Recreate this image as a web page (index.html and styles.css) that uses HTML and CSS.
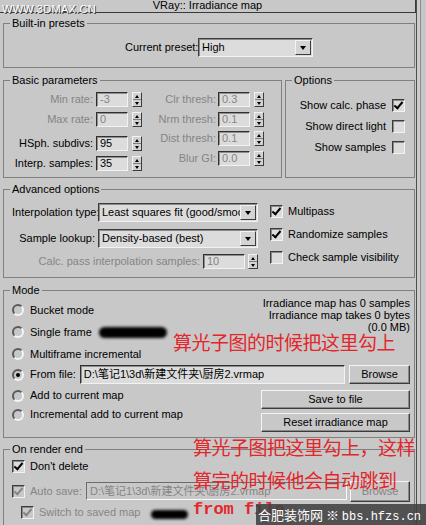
FILE: index.html
```html
<!DOCTYPE html>
<html lang="zh-CN">
<head>
	<meta charset="UTF-8">
	<meta name="viewport" content="width=device-width, initial-scale=1">
	<title>VRay:: Irradiance map</title>
	<link rel="stylesheet" href="styles.css">
</head>
<body>

	<div class="rollout">
		<div class="title">VRay:: Irradiance map</div>

		<fieldset class="grp presets">
			<legend>Built-in presets</legend>
			<div class="preset-row">
				<span class="lbl">Current preset:</span>
				<div class="combo preset"><span>High</span><i class="drop"></i></div>
			</div>
		</fieldset>

		<div class="pair">
			<fieldset class="grp basic">
				<legend>Basic parameters</legend>
				<div class="cols">
					<div class="col col-a">
						<div class="prm off"><span class="lbl">Min rate:</span><span class="field">-3</span><span class="spin"><i></i><i></i></span></div>
						<div class="prm off"><span class="lbl">Max rate:</span><span class="field">0</span><span class="spin"><i></i><i></i></span></div>
						<div class="prm sep"><span class="lbl">HSph. subdivs:</span><span class="field">95</span><span class="spin"><i></i><i></i></span></div>
						<div class="prm"><span class="lbl">Interp. samples:</span><span class="field">35</span><span class="spin"><i></i><i></i></span></div>
					</div>
					<div class="col col-b">
						<div class="prm off"><span class="lbl">Clr thresh:</span><span class="field">0.3</span><span class="spin"><i></i><i></i></span></div>
						<div class="prm off"><span class="lbl">Nrm thresh:</span><span class="field">0.1</span><span class="spin"><i></i><i></i></span></div>
						<div class="prm off tight"><span class="lbl">Dist thresh:</span><span class="field">0.1</span><span class="spin"><i></i><i></i></span></div>
						<div class="prm off"><span class="lbl">Blur GI:</span><span class="field">0.0</span><span class="spin"><i></i><i></i></span></div>
					</div>
				</div>
			</fieldset>

			<fieldset class="grp options">
				<legend>Options</legend>
				<div class="opt-list">
					<div class="opt">Show calc. phase<span class="chk on"></span></div>
					<div class="opt">Show direct light<span class="chk"></span></div>
					<div class="opt">Show samples<span class="chk"></span></div>
				</div>
			</fieldset>
		</div>

		<fieldset class="grp adv">
			<legend>Advanced options</legend>
			<div class="adv-body">
				<div class="adv-left">
					<div class="arow"><span class="lbl">Interpolation type:</span><div class="combo wide"><span>Least squares fit (good/smooth)</span><i class="drop"></i></div></div>
					<div class="arow"><span class="lbl">Sample lookup:</span><div class="combo wide"><span>Density-based (best)</span><i class="drop"></i></div></div>
					<div class="arow calc off"><span>Calc. pass interpolation samples:</span><span class="field">10</span><span class="spin"><i></i><i></i></span></div>
				</div>
				<div class="adv-right">
					<div class="ck"><span class="chk on"></span>Multipass</div>
					<div class="ck"><span class="chk on"></span>Randomize samples</div>
					<div class="ck"><span class="chk"></span>Check sample visibility</div>
				</div>
			</div>
		</fieldset>

		<fieldset class="grp mode">
			<legend>Mode</legend>
			<div class="mode-top">
				<div class="radios">
					<div class="rd"><span class="radio"></span>Bucket mode</div>
					<div class="rd"><span class="radio"></span>Single frame</div>
					<div class="rd"><span class="radio"></span>Multiframe incremental</div>
				</div>
				<div class="status">Irradiance map has 0 samples<br>Irradiance map takes 0 bytes<br>(0.0 MB)</div>
			</div>
			<div class="file-row">
				<div class="rd"><span class="radio on"></span>From file:</div>
				<span class="field path">D:\笔记1\3d\新建文件夹\厨房2.vrmap</span>
				<span class="btn browse">Browse</span>
			</div>
			<div class="mode-bottom">
				<div class="radios low">
					<div class="rd"><span class="radio"></span>Add to current map</div>
					<div class="rd"><span class="radio"></span>Incremental add to current map</div>
				</div>
				<div class="btns">
					<span class="btn">Save to file</span>
					<span class="btn">Reset irradiance map</span>
				</div>
			</div>
		</fieldset>

		<fieldset class="grp rend">
			<legend>On render end</legend>
			<div class="rend-body">
				<div class="ck"><span class="chk on"></span>Don't delete</div>
				<div class="save-row off">
					<div class="ck"><span class="chk on"></span>Auto save:</div>
					<span class="field path">D:\笔记1\3d\新建文件夹\厨房2.vrmap</span>
					<span class="btn browse">Browse</span>
				</div>
				<div class="ck sub off"><span class="chk on"></span>Switch to saved map</div>
			</div>
		</fieldset>
	</div>

	<div class="scroll"><div class="track"></div></div>

	<!-- 图上的标注和水印 -->
	<div class="wm-top">WWW.3DMAX.CN</div>
	<div class="smear s1"></div>
	<div class="note n1">算光子图的时候把这里勾上</div>
	<div class="note n2">算光子图把这里勾上，这样</div>
	<div class="note n3">算完的时候他会自动跳到</div>
	<div class="note n4">from file</div>
	<div class="smear s2"></div>
	<div class="wm-bot"><span class="cn">合肥装饰网</span> ※ <span class="url">bbs.hfzs.cn</span></div>

</body>
</html>
```

FILE: styles.css
```css
* {
	box-sizing: border-box;
}
body {
	margin: 0;
	width: 426px;
	height: 525px;
	overflow: hidden;
	position: relative;
	display: flex;
	background: #c8c8c8;
	color: #000;
	font: 11px/13px "Liberation Sans", Arial, "Noto Sans CJK SC", sans-serif;
}
.rollout {
	width: 416px;
}
.scroll {
	flex: 1;
	border-left: 1px solid #4e4e4e;
	padding-left: 3px;
	background: #cbcbcb;
}
.track {
	height: 100%;
	border-left: 1px solid #8e8e8e;
	background: #c6c6c6;
}
.title {
	height: 13px;
	line-height: 11px;
	text-align: center;
	border-bottom: 1px solid #3a3a3a;
	border-right: 1px solid #3a3a3a;
}

/* group boxes */
.grp {
	margin: 0 1px 0 3px;
	padding: 0;
	min-width: 0;
	border: 1px solid #808080;
}
.grp legend {
	margin-left: 6px;
	padding: 0 2px;
	line-height: 13px;
}
.presets {
	margin-top: 4px;
}
.adv, .rend {
	margin-top: 5px;
}
.mode {
	margin-top: 6px;
}
.lbl {
	text-align: right;
	white-space: nowrap;
}
.off {
	color: #858585;
}

/* controls */
.combo {
	display: flex;
	align-items: center;
	min-width: 0;
	height: 19px;
	padding-left: 3px;
	background: #dcdcdc;
	border: 1px solid;
	border-color: #3c3c3c #f2f2f2 #f2f2f2 #3c3c3c;
	box-shadow: inset 1px 1px 0 #8a8a8a;
}
.combo span {
	flex: 1;
	min-width: 0;
	overflow: hidden;
	white-space: nowrap;
}
.drop {
	display: flex;
	align-items: center;
	justify-content: center;
	flex: none;
	width: 16px;
	height: 15px;
	margin-right: 1px;
	background: #d4d4d4;
	border: 1px solid;
	border-color: #f4f4f4 #3c3c3c #3c3c3c #f4f4f4;
}
.drop::after {
	content: "";
	border-left: 3.5px solid transparent;
	border-right: 3.5px solid transparent;
	border-top: 4px solid #000;
}
.field {
	width: 32px;
	height: 15px;
	padding-left: 3px;
	line-height: 13px;
	white-space: nowrap;
	overflow: hidden;
	background: #dcdcdc;
	border: 1px solid;
	border-color: #303030 #f2f2f2 #f2f2f2 #303030;
	box-shadow: inset 1px 1px 0 #8e8e8e;
}
.spin {
	display: flex;
	flex-direction: column;
	width: 10px;
	height: 15px;
	background: #d2d2d2;
	border: 1px solid;
	border-color: #f2f2f2 #3c3c3c #3c3c3c #f2f2f2;
}
.spin i {
	flex: 1;
	display: flex;
	align-items: center;
	justify-content: center;
}
.spin i + i {
	border-top: 1px solid #7c7c7c;
}
.spin i::after {
	content: "";
	border-left: 2.5px solid transparent;
	border-right: 2.5px solid transparent;
	border-bottom: 3px solid #000;
}
.spin i + i::after {
	border-bottom: 0;
	border-top: 3px solid #000;
}
.chk {
	display: flex;
	align-items: center;
	justify-content: center;
	flex: none;
	width: 13px;
	height: 13px;
	background: #dcdcdc;
	border: 1px solid;
	border-color: #3c3c3c #f2f2f2 #f2f2f2 #3c3c3c;
	box-shadow: inset 1px 1px 0 #8a8a8a;
}
.chk.on::after {
	content: "";
	width: 3px;
	height: 7px;
	margin-top: -2px;
	border: solid #000;
	border-width: 0 2px 2px 0;
	transform: rotate(40deg);
}
.off .chk {
	background: #c8c8c8;
}
.off .chk.on::after {
	border-color: #858585;
}
.radio {
	display: flex;
	align-items: center;
	justify-content: center;
	flex: none;
	width: 12px;
	height: 12px;
	border-radius: 50%;
	border: 2px solid;
	border-color: #5a5a5a #f4f4f4 #f4f4f4 #5a5a5a;
}
.radio.on::after {
	content: "";
	width: 4px;
	height: 4px;
	border-radius: 50%;
	background: #000;
}
.btn {
	display: flex;
	align-items: center;
	justify-content: center;
	flex: none;
	height: 19px;
	white-space: nowrap;
	border: 1px solid;
	border-color: #f4f4f4 #3c3c3c #3c3c3c #f4f4f4;
	box-shadow: inset -1px -1px 0 #8a8a8a;
}

/* built-in presets */
.preset-row {
	display: flex;
	align-items: center;
	gap: 3px;
	padding: 8px 0 10px 121px;
}
.preset-row .lbl {
	width: 70px;
}
.preset {
	width: 115px;
}

/* basic parameters + options */
.pair {
	display: flex;
	gap: 3px;
	margin: 6px 1px 0 3px;
}
.pair .grp {
	margin: 0;
}
.basic {
	width: 279px;
}
.options {
	flex: 1;
}
.cols {
	display: flex;
	padding: 5px 0 6px 8px;
}
.col-a {
	width: 131px;
}
.col-b {
	margin-left: 7px;
}
.prm {
	display: flex;
	align-items: center;
	height: 15px;
}
.prm + .prm {
	margin-top: 5px;
}
.prm.sep {
	margin-top: 9px;
}
.prm.tight {
	margin-top: 4px;
}
.col-a .lbl {
	width: 81px;
	margin-right: 3px;
}
.col-b .lbl {
	width: 66px;
	margin-right: 2px;
}
.prm .field {
	margin-right: 4px;
}
.opt-list {
	display: flex;
	flex-direction: column;
	align-items: flex-end;
	gap: 7px;
	padding: 11px 9px 0 0;
}
.opt {
	display: flex;
	align-items: center;
	gap: 6px;
	height: 14px;
}

/* advanced options */
.adv-body {
	display: flex;
	padding: 7px 0 8px 8px;
}
.adv-left {
	flex: none;
	width: 246px;
}
.arow {
	display: flex;
	align-items: center;
}
.arow + .arow {
	margin-top: 7px;
}
.arow .lbl {
	flex: none;
	width: 83px;
	margin-right: 3px;
}
.wide {
	flex: 1;
}
.arow.calc {
	justify-content: flex-end;
	margin-top: 6px;
	height: 15px;
	white-space: nowrap;
}
.calc .field {
	width: 42px;
	margin: 0 3px;
}
.adv-right {
	display: flex;
	flex-direction: column;
	gap: 9px;
	margin-left: 12px;
	padding-top: 1px;
}
.ck {
	display: flex;
	align-items: center;
	flex: none;
	gap: 5px;
	height: 14px;
	white-space: nowrap;
}

/* mode */
.mode-top, .file-row, .mode-bottom {
	display: flex;
	padding: 0 4px 0 8px;
}
.mode-top {
	justify-content: space-between;
	height: 68px;
}
.radios {
	padding-top: 2px;
}
.rd {
	display: flex;
	align-items: center;
	flex: none;
	gap: 6px;
	height: 22px;
	white-space: nowrap;
}
.low .rd {
	height: 19px;
}
.status {
	text-align: right;
	line-height: 12px;
}
.file-row {
	align-items: center;
	gap: 4px;
	height: 19px;
}
.file-row .rd {
	height: 19px;
}
.path {
	width: 268px;
	height: 19px;
	line-height: 17px;
	margin-left: auto;
}
.browse {
	width: 61px;
}
.mode-bottom {
	justify-content: space-between;
	padding-bottom: 5px;
}
.btns {
	display: flex;
	flex-direction: column;
	gap: 4px;
	width: 149px;
	padding-top: 6px;
}

/* on render end */
.rend-body {
	padding: 3px 4px 30px 8px;
}
.save-row {
	display: flex;
	align-items: center;
	gap: 3px;
	height: 18px;
	margin-top: 9px;
}
.save-row .path {
	width: 261px;
	height: 18px;
	background: #c8c8c8;
	border-color: #6c6c6c #fafafa #fafafa #6c6c6c;
	box-shadow: none;
}
.save-row .browse {
	width: 60px;
	height: 21px;
}
.ck.sub {
	margin-top: 5px;
	padding-left: 9px;
}

/* overlays: notes and watermarks drawn over the screenshot */
.wm-top {
	position: absolute;
	left: 2px;
	top: 3px;
	color: #fff;
	font: 11px/12px "Liberation Sans", Arial, sans-serif;
	letter-spacing: 0.3px;
	text-shadow: 1px 1px 0 #3a3a3a;
}
.smear {
	position: absolute;
	background: #000;
	border-radius: 8px;
	filter: blur(1.5px);
}
.s1 {
	left: 99px;
	top: 327px;
	width: 68px;
	height: 11px;
}
.s2 {
	left: 151px;
	top: 510px;
	width: 37px;
	height: 9px;
}
.note {
	position: absolute;
	color: #e3262b;
	font: 19px/24px "Noto Sans CJK SC", sans-serif;
	letter-spacing: -0.5px;
	white-space: nowrap;
}
.n1 {
	left: 173px;
	top: 330px;
}
.n2 {
	left: 193px;
	top: 435px;
}
.n3 {
	left: 193px;
	top: 468px;
}
.n4 {
	left: 193px;
	top: 500px;
	font: bold 17px/20px "Liberation Mono", monospace;
	letter-spacing: 0;
}
.wm-bot {
	position: absolute;
	left: 256px;
	top: 504px;
	width: 170px;
	height: 21px;
	padding-left: 2px;
	background: rgba(64, 64, 64, 0.88);
	color: #fff;
	font: 13px/21px "Noto Sans CJK SC", sans-serif;
	white-space: nowrap;
}
.wm-bot .url {
	font: 12px/21px "Liberation Mono", monospace;
}
```
